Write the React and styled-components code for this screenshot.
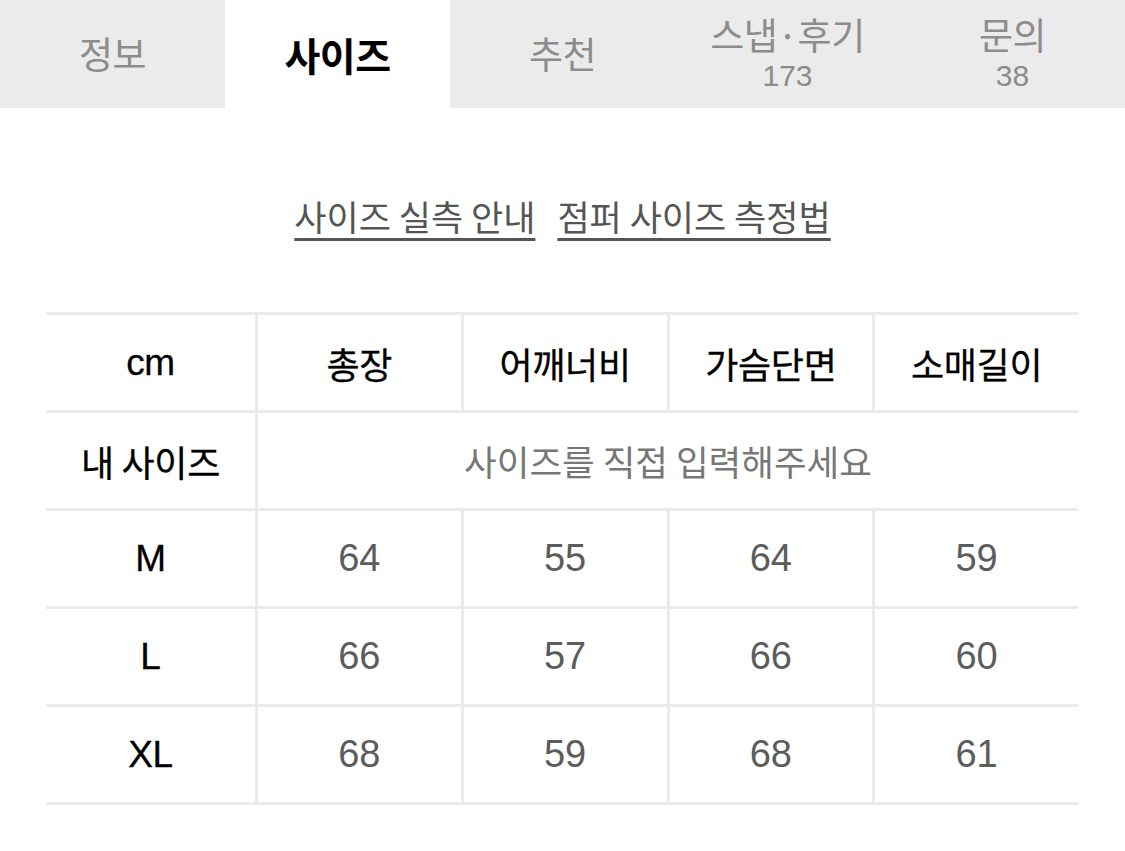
import React from 'react'
import styled, { createGlobalStyle } from 'styled-components'

const tabs = [
  { label: '정보' },
  { label: '사이즈', active: true },
  { label: '추천' },
  { label: '스냅·후기', count: 173 },
  { label: '문의', count: 38 },
]

const columns = ['총장', '어깨너비', '가슴단면', '소매길이']

const sizes = [
  { name: 'M', values: [64, 55, 64, 59] },
  { name: 'L', values: [66, 57, 66, 60] },
  { name: 'XL', values: [68, 59, 68, 61] },
]

const App = () => {
  return (
    <Page>
      <GlobalStyle />

      <TabBar>
        {tabs.map(tab => (
          <Tab key={tab.label} active={tab.active}>
            <TabLabel active={tab.active}>{tab.label}</TabLabel>
            {tab.count !== undefined && <TabCount>{tab.count}</TabCount>}
          </Tab>
        ))}
      </TabBar>

      <Links>
        <GuideLink>사이즈 실측 안내</GuideLink>
        <GuideLink>점퍼 사이즈 측정법</GuideLink>
      </Links>

      <SizeTable>
        <HeadCell first latin>cm</HeadCell>
        {columns.map(col => (
          <HeadCell key={col}>{col}</HeadCell>
        ))}

        <HeadCell first>내 사이즈</HeadCell>
        <InputCell>사이즈를 직접 입력해주세요</InputCell>

        {sizes.map(size => (
          <React.Fragment key={size.name}>
            <HeadCell first latin>{size.name}</HeadCell>
            {size.values.map((v, i) => (
              <ValueCell key={i}>{v}</ValueCell>
            ))}
          </React.Fragment>
        ))}
      </SizeTable>
    </Page>
  )
}

export default App

const GlobalStyle = createGlobalStyle`
  html, body {
    margin: 0;
    padding: 0;
    background: #fff;
  }
  body {
    font-family: "Liberation Sans", "Noto Sans CJK KR", sans-serif;
  }
`

const Page = styled.div`
  width: 1125px;
  min-height: 851px;
  background: #fff;
`

const TabBar = styled.nav`
  display: flex;
  height: 108px;
  background: #ebebeb;
`

const Tab = styled.div`
  flex: 1;
  display: flex;
  flex-direction: column;
  align-items: center;
  justify-content: center;
  background: ${props => (props.active ? '#fff' : 'transparent')};
  height: ${props => (props.active ? '110px' : '108px')};
  padding-bottom: 2px;
  box-sizing: border-box;
`

const TabLabel = styled.span`
  font-family: "Noto Sans CJK KR", sans-serif;
  font-size: ${props => (props.active ? '39px' : '37px')};
  font-weight: ${props => (props.active ? 700 : 400)};
  color: ${props => (props.active ? '#000' : '#8c8c8c')};
  line-height: 42px;
  letter-spacing: -0.5px;
`

const TabCount = styled.span`
  font-size: 30px;
  color: #8c8c8c;
  line-height: 34px;
  margin-top: 4px;
`

const Links = styled.div`
  display: flex;
  justify-content: center;
  gap: 22px;
  padding: 84px 0 72px;
`

const GuideLink = styled.a`
  font-family: "Noto Sans CJK KR", sans-serif;
  font-size: 35px;
  line-height: 48px;
  color: #555;
  text-decoration: underline;
  text-decoration-thickness: 3px;
  text-underline-offset: 7px;
  cursor: pointer;
`

const SizeTable = styled.div`
  display: grid;
  grid-template-columns: 209px repeat(4, 1fr);
  grid-auto-rows: 98px;
  margin: 0 47px 0 46px;
  border-top: 3px solid #ebebeb;
`

const Cell = styled.div`
  display: flex;
  align-items: center;
  justify-content: center;
  box-sizing: border-box;
  border-bottom: 3px solid #ebebeb;
  border-left: ${props => (props.first ? 'none' : '3px solid #ebebeb')};
`

const HeadCell = styled(Cell)`
  font-family: ${props => (props.latin ? '"Liberation Sans", sans-serif' : '"Noto Sans CJK KR", sans-serif')};
  font-size: ${props => (props.latin ? '37px' : '36px')};
  font-weight: 400;
  color: #000;
  -webkit-text-stroke: 0.3px #000;
  letter-spacing: -0.3px;
`

const ValueCell = styled(Cell)`
  font-size: 38px;
  color: #5c5c5c;
`

const InputCell = styled(Cell)`
  grid-column: span 4;
  font-family: "Noto Sans CJK KR", sans-serif;
  color: #777;
  font-size: 35.5px;
`
